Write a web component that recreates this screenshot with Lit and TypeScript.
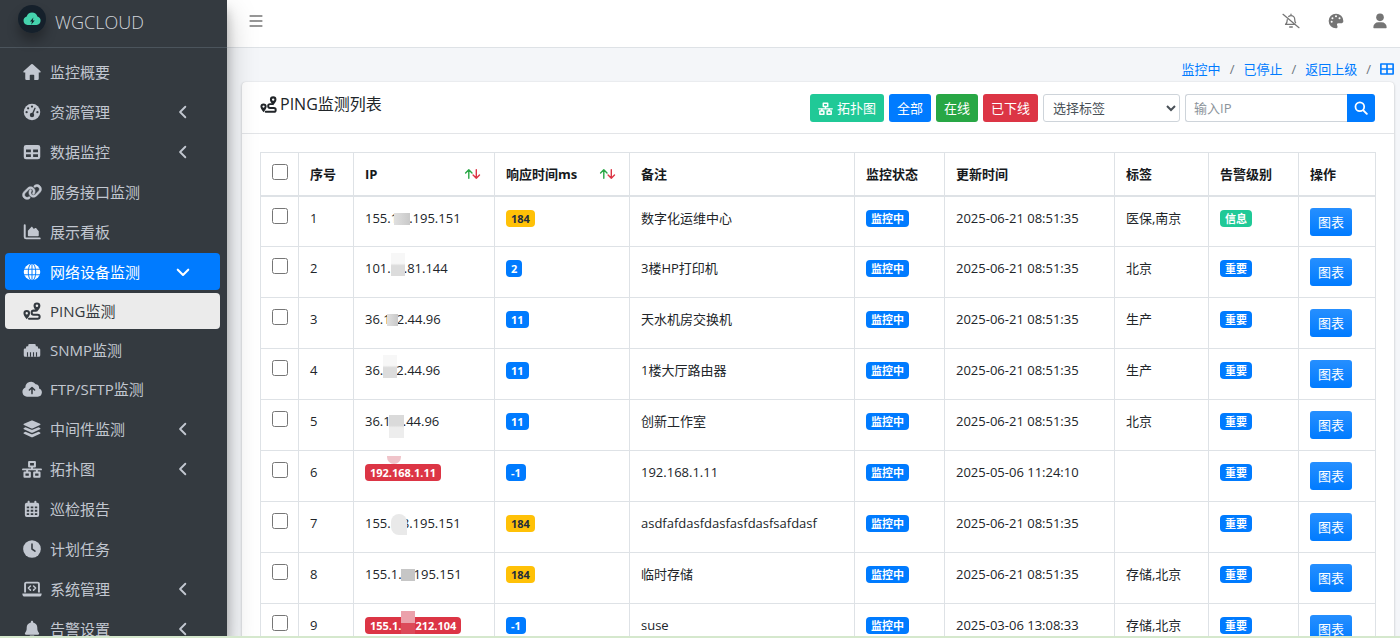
import { LitElement, html, css, nothing } from "lit";
import type { TemplateResult } from "lit";
import { customElement, property } from "lit/decorators.js";
import { classMap } from "lit/directives/class-map.js";
import { styleMap } from "lit/directives/style-map.js";

const icons: Record<string, TemplateResult> = {
  home: html`<svg viewBox="0 0 24 24"><path fill="currentColor" d="M11 1.6a1.6 1.6 0 0 1 2 0l10 9c1 .9.6 2.2-.6 2.2H21V21a1.7 1.7 0 0 1-1.7 1.7H15V16.5a1 1 0 0 0-1-1h-4a1 1 0 0 0-1 1v6.2H4.7A1.7 1.7 0 0 1 3 21v-8.200H1.600c-1.200 0-1.600-1.300-.6-2.200z"/></svg>`,
  gauge: html`<svg viewBox="0 0 24 24"><circle cx="12" cy="12" r="11" fill="currentColor"/><g fill="var(--cut)"><circle cx="12" cy="4.800" r="1.500"/><circle cx="6.800" cy="7" r="1.500"/><circle cx="4.800" cy="12.200" r="1.500"/><circle cx="19.200" cy="12.200" r="1.500"/><circle cx="12" cy="16" r="2.900"/></g><path d="M12 16 16 7" stroke="var(--cut)" stroke-width="1.800" stroke-linecap="round"/></svg>`,
  table: html`<svg viewBox="0 0 24 24"><path fill="currentColor" fill-rule="evenodd" d="M4 2.500h16a3 3 0 0 1 3 3v13a3 3 0 0 1-3 3H4a3 3 0 0 1-3-3v-13a3 3 0 0 1 3-3zM4 8.500v3.700h6.500V8.500zm9.500 0v3.700H20V8.500zM4 15v3.700h6.500V15zm9.500 0v3.700H20V15z"/></svg>`,
  link: html`<svg viewBox="0 0 640 512"><path fill="currentColor" stroke="currentColor" stroke-width="18" d="M580 267c56-57 56-148 0-205-50-50-129-56-187-15l-2 1c-14 11-17 31-7 45 10 15 30 18 45 8l1-1c32-23 76-20 104 8 31 31 31 82 0 113L422 334c-32 31-82 31-113 0-28-28-32-72-9-104l1-2c10-14 7-34-7-44s-34-7-45 7l-1 2c-41 57-35 136 15 187 57 56 148 56 205 0zM60 245c-57 56-57 148 0 204 50 51 129 57 187 16l2-2c14-10 17-30 7-44-10-15-30-18-45-8l-1 1c-32 23-76 20-104-9-31-31-31-81 0-112l112-113c32-31 82-31 113 0 28 28 32 72 9 104l-1 2c-10 14-7 34 7 44s34 7 45-7l1-2c41-57 35-136-15-186-57-57-148-57-205 0z"/></svg>`,
  chart: html`<svg viewBox="0 0 24 24"><path fill="none" stroke="currentColor" stroke-width="2.600" stroke-linecap="round" stroke-linejoin="round" d="M2.300 3v15.500a2 2 0 0 0 2 2h18"/><path fill="currentColor" d="M6.500 16.500v-6.200l4.300-4.800c.5-.6 1.300-.6 1.800 0L14.500 8l1.600-1.200c.5-.4 1.200-.3 1.600.3l3.300 4v5.400c0 .5-.4 1-1 1H7.500c-.6 0-1-.5-1-1z"/></svg>`,
  globe: html`<svg viewBox="0 0 24 24"><circle cx="12" cy="12" r="11" fill="currentColor"/><g fill="none" stroke="var(--cut)" stroke-width="1.300"><ellipse cx="12" cy="12" rx="5" ry="11.500"/><path d="M0 8.300h24M0 15.700h24M12 0v24"/></g></svg>`,
  route: html`<svg viewBox="0 0 24 24"><path fill="none" stroke="currentColor" stroke-width="2.700" stroke-linecap="round" d="M17.200 11.500h-3a2.700 2.700 0 0 0 0 5.400h5.300a2.700 2.700 0 0 1 0 5.400H8"/><path fill="currentColor" fill-rule="evenodd" d="M18.600.5a4.600 4.600 0 0 1 4.600 4.600c0 2.500-2.300 5.500-4.600 8-2.300-2.500-4.600-5.500-4.600-8A4.600 4.600 0 0 1 18.600.5zm0 2.900a1.700 1.700 0 1 0 0 3.400 1.700 1.700 0 0 0 0-3.400zM5 10.500a4.400 4.400 0 0 1 4.400 4.400c0 2.400-2.200 5.500-4.400 8-2.200-2.500-4.400-5.600-4.400-8A4.400 4.400 0 0 1 5 10.500zm0 2.800a1.600 1.600 0 1 0 0 3.200 1.600 1.600 0 0 0 0-3.200z"/></svg>`,
  port: html`<svg viewBox="0 0 24 24"><path fill="currentColor" d="M2.500 10H4V8.500A1.500 1.500 0 0 1 5.500 7H7V5.500A1.500 1.500 0 0 1 8.500 4h7A1.500 1.500 0 0 1 17 5.500V7h1.500A1.500 1.500 0 0 1 20 8.500V10h1.500A1.500 1.500 0 0 1 23 11.500V19a2 2 0 0 1-2 2H3a2 2 0 0 1-2-2v-7.500A1.500 1.500 0 0 1 2.500 10z"/><path stroke="var(--cut)" stroke-width="1.500" d="M6 15v6M10 15v6M14 15v6M18 15v6"/></svg>`,
  cloudUp: html`<svg viewBox="0 0 26 23"><path fill="currentColor" d="M6.500 21.500A6.200 6.200 0 0 1 4.400 9.600a7.300 7.300 0 0 1 13.400-4.200 4.500 4.500 0 0 1 4.300 5.400 5.500 5.500 0 0 1-1.600 10.700z"/><path fill="none" stroke="var(--cut)" stroke-width="2" stroke-linecap="round" stroke-linejoin="round" d="M13 17.500V10M9.600 12.800 13 9.500l3.400 3.300"/></svg>`,
  layers: html`<svg viewBox="0 0 24 24"><path fill="currentColor" d="M11.300.8a2 2 0 0 1 1.400 0l10 4.200c.8.400.8 1.400 0 1.800l-10 4.400a2 2 0 0 1-1.400 0L1.300 6.800c-.8-.4-.8-1.400 0-1.800zM3.300 9.600l7.300 3.200a3.500 3.500 0 0 0 2.800 0l7.300-3.200 2 .9c.8.400.8 1.500 0 1.900l-10 4.500a2 2 0 0 1-1.400 0l-10-4.500c-.8-.4-.8-1.500 0-1.900zM3.300 15.600l7.300 3.200a3.500 3.500 0 0 0 2.800 0l7.300-3.200 2 .9c.8.400.8 1.500 0 1.900l-10 4.500a2 2 0 0 1-1.400 0l-10-4.500c-.8-.4-.8-1.500 0-1.900z"/></svg>`,
  network: html`<svg viewBox="0 0 26 23"><path fill="none" stroke="currentColor" stroke-width="2.600" stroke-linejoin="round" d="M9.200 2.500h7.600v5.600H9.200zM3.200 16h7v5.600h-7zM15.800 16h7v5.600h-7zM13 8v4M6.700 12v4M19.300 12v4"/><path stroke="currentColor" stroke-width="2.300" stroke-linecap="round" d="M1.200 12h23.600"/></svg>`,
  calendar: html`<svg viewBox="0 0 24 24"><path fill="currentColor" fill-rule="evenodd" d="M7.500 1c.8 0 1.400.6 1.400 1.400v1.300h6.200V2.400a1.400 1.400 0 0 1 2.800 0v1.300H19a2.500 2.500 0 0 1 2.500 2.500V20a2.500 2.500 0 0 1-2.500 2.500H5A2.500 2.500 0 0 1 2.500 20V6.200A2.500 2.500 0 0 1 5 3.700h1.100V2.400C6.100 1.600 6.700 1 7.500 1zM5 8.500v2.600h3.200V8.500zm5.300 0v2.600h3.400V8.500zm5.500 0v2.600H19V8.500zM5 13.100v2.500h3.200v-2.500zm5.300 0v2.500h3.400v-2.500zm5.500 0v2.500H19v-2.500zM5 17.600v2.500h3.200v-2.500zm5.300 0v2.500h3.400v-2.500zm5.500 0v2.500H19v-2.500z"/></svg>`,
  clock: html`<svg viewBox="0 0 24 24"><circle cx="12" cy="12" r="11.800" fill="currentColor"/><path fill="none" stroke="var(--cut)" stroke-width="2.100" stroke-linecap="round" stroke-linejoin="round" d="M12 5.500V12l4 2.800"/></svg>`,
  laptop: html`<svg viewBox="0 0 26 23"><path fill="none" stroke="currentColor" stroke-width="2.500" stroke-linejoin="round" d="M4 16V4.800A1.600 1.600 0 0 1 5.600 3.200h14.800A1.600 1.600 0 0 1 22 4.800V16"/><path fill="currentColor" d="M.5 17.200h25v.8a3.300 3.300 0 0 1-3.300 3.300H3.800A3.300 3.300 0 0 1 .5 18z"/><path fill="none" stroke="currentColor" stroke-width="2" stroke-linecap="round" stroke-linejoin="round" d="m11 7.600-2.700 2.700L11 13M15 7.600l2.700 2.700L15 13"/></svg>`,
  bell: html`<svg viewBox="0 0 24 24"><path fill="currentColor" d="M12 1c.8 0 1.500.6 1.500 1.500v.8c3.300.7 5.600 3.400 5.600 7v1.500c0 2 .7 3.700 2 5.200.9 1 .3 2.500-1 2.500H3.900c-1.300 0-1.900-1.500-1-2.500 1.300-1.500 2-3.200 2-5.200v-1.500c0-3.600 2.300-6.300 5.600-7v-.8C10.500 1.600 11.200 1 12 1zM9 20.500h6a3 3 0 0 1-6 0z"/></svg>`,
  bellOff: html`<svg viewBox="0 0 26 24"><g fill="none" stroke="currentColor" stroke-width="1.900" stroke-linecap="round" stroke-linejoin="round"><path d="M1 2l24 20M9.500 5.200A5.500 5.500 0 0 1 13 4a5.600 5.600 0 0 1 5.600 5.600c0 2 .4 3.600 1.300 5M7.400 10c0 3.400-.8 5.300-2.600 7.200h13M13 1.800V4M11 21h4"/></g></svg>`,
  palette: html`<svg viewBox="0 0 24 24"><path fill="currentColor" d="M23 12v.2c0 2-1.800 3.300-3.700 3.300h-3.600a2.200 2.200 0 0 0-2 3c.3.700.6 1.200.6 2 0 1.400-1 2.500-2.300 2.500A11 11 0 1 1 23 12z"/><g fill="var(--cut)"><circle cx="5.500" cy="13" r="1.500"/><circle cx="6.700" cy="7.800" r="1.500"/><circle cx="12" cy="5" r="1.500"/><circle cx="17.300" cy="7.800" r="1.500"/></g></svg>`,
  user: html`<svg viewBox="0 0 24 24"><circle cx="12" cy="6.500" r="5.700" fill="currentColor"/><path fill="currentColor" d="M2 21.500A7.500 7.500 0 0 1 9.500 14h5a7.500 7.500 0 0 1 7.500 7.500c0 .9-.6 1.500-1.400 1.500H3.400c-.8 0-1.400-.6-1.400-1.500z"/></svg>`,
  menu: html`<svg viewBox="0 0 24 24"><path stroke="currentColor" stroke-width="2.700" stroke-linecap="round" d="M2 3.500h20M2 12h20M2 20.500h20"/></svg>`,
  grid: html`<svg viewBox="0 0 24 24"><path fill="none" stroke="currentColor" stroke-width="2.800" stroke-linejoin="round" d="M1.500 3.500h21v17h-21zM12 3.500v17M1.500 12h21"/></svg>`,
  left: html`<svg viewBox="0 0 24 24"><path fill="none" stroke="currentColor" stroke-width="3.200" stroke-linecap="round" stroke-linejoin="round" d="M16 3 7 12l9 9"/></svg>`,
  down: html`<svg viewBox="0 0 24 24"><path fill="none" stroke="currentColor" stroke-width="3.600" stroke-linecap="round" stroke-linejoin="round" d="m3 8 9 9 9-9"/></svg>`,
  search: html`<svg viewBox="0 0 24 24"><circle cx="10" cy="10" r="7.500" fill="none" stroke="currentColor" stroke-width="3"/><path stroke="currentColor" stroke-width="3.300" stroke-linecap="round" d="m16 16 6 6"/></svg>`,
  sort: html`<svg viewBox="0 0 17 12"><g fill="none" stroke-width="1.400" stroke-linecap="round" stroke-linejoin="round"><path stroke="#28a745" d="M4.800 10.200V1.800M1.600 5l3.200-3.200L8 5"/><path stroke="#dc3545" d="M12.300 1.600v8.600M9.100 7l3.200 3.200L15.500 7"/></g></svg>`,
  logo: html`<svg viewBox="0 0 28 28"><circle cx="14" cy="14" r="14" fill="#15202b"/><path fill="#45d3ae" d="M9.500 20a4.400 4.400 0 0 1-.8-8.600 5.600 5.600 0 0 1 10.700 0A4.400 4.400 0 0 1 18.600 20z"/><path fill="#15202b" d="m15.400 12.500-3.400 4h2l-.8 3.300 3.500-4.200h-2z"/></svg>`,
};

interface NavItem {
  icon: string;
  label: string;
  fold?: boolean;
  open?: boolean;
  children?: NavItem[];
}

const NAV: NavItem[] = [
  { icon: "home", label: "监控概要" },
  { icon: "gauge", label: "资源管理", fold: true },
  { icon: "table", label: "数据监控", fold: true },
  { icon: "link", label: "服务接口监测" },
  { icon: "chart", label: "展示看板" },
  {
    icon: "globe", label: "网络设备监测", fold: true, open: true,
    children: [
      { icon: "route", label: "PING监测", open: true },
      { icon: "port", label: "SNMP监测" },
      { icon: "cloudUp", label: "FTP/SFTP监测" },
    ],
  },
  { icon: "layers", label: "中间件监测", fold: true },
  { icon: "network", label: "拓扑图", fold: true },
  { icon: "calendar", label: "巡检报告" },
  { icon: "clock", label: "计划任务" },
  { icon: "laptop", label: "系统管理", fold: true },
  { icon: "bell", label: "告警设置", fold: true },
];

/** An address whose middle part is hidden behind a mosaic block `mask` pixels wide. */
interface Ip {
  head: string;
  mask?: number;
  tone?: string;
  tail?: string;
}

interface Row {
  ip: Ip;
  down?: boolean;
  ms: number;
  note: string;
  time: string;
  tags: string;
  level: string;
}

const NOW = "2025-06-21 08:51:35";
const ROWS: Row[] = [
  { ip: { head: "155.1", mask: 11, tone: "mid", tail: ".195.151" }, ms: 184, note: "数字化运维中心", time: NOW, tags: "医保,南京", level: "信息" },
  { ip: { head: "101.", mask: 13, tone: "tall", tail: ".81.144" }, ms: 2, note: "3楼HP打印机", time: NOW, tags: "北京", level: "重要" },
  { ip: { head: "36.1", mask: 6, tone: "mid", tail: "2.44.96" }, ms: 11, note: "天水机房交换机", time: NOW, tags: "生产", level: "重要" },
  { ip: { head: "36.", mask: 13, tone: "tall", tail: "2.44.96" }, ms: 11, note: "1楼大厅路由器", time: NOW, tags: "生产", level: "重要" },
  { ip: { head: "36.1", mask: 12, tone: "low", tail: ".44.96" }, ms: 11, note: "创新工作室", time: NOW, tags: "北京", level: "重要" },
  { ip: { head: "192.168.1.11", mask: 0, tone: "cap" }, down: true, ms: -1, note: "192.168.1.11", time: "2025-05-06 11:24:10", tags: "", level: "重要" },
  { ip: { head: "155.", mask: 11, tone: "pale", tail: "8.195.151" }, ms: 184, note: "asdfafdasfdasfasfdasfsafdasf", time: NOW, tags: "", level: "重要" },
  { ip: { head: "155.1.", mask: 12, tone: "dark", tail: "195.151" }, ms: 184, note: "临时存储", time: NOW, tags: "存储,北京", level: "重要" },
  { ip: { head: "155.1.", mask: 14, tone: "pink", tail: "212.104" }, down: true, ms: -1, note: "suse", time: "2025-03-06 13:08:33", tags: "存储,北京", level: "重要" },
];

const base = css`
  * { box-sizing: border-box; }
  svg { display: block; width: 100%; height: 100%; }
  a { text-decoration: none; color: inherit; }
  button, input, select { font: inherit; }
  .icon { display: block; flex: none; width: 18px; height: 18px; }
`;

@customElement("side-nav")
export class SideNav extends LitElement {
  static styles = [
    base,
    css`
      :host {
        --cut: #343a40;
        display: flex;
        flex-direction: column;
        background: #343a40;
        color: #c2c7d0;
        overflow: hidden;
        font-size: 15px;
        line-height: 22px;
      }
      .brand {
        display: flex;
        flex: none;
        gap: 9px;
        height: 48px;
        padding: 5px 18px;
        border-bottom: 1px solid #4b545c;
        font-size: 18px;
        font-weight: 300;
        line-height: 34px;
        color: #d0d4da;
      }
      .logo { width: 28px; height: 28px; border-radius: 50%; box-shadow: 0 8px 12px rgba(0, 0, 0, 0.3); }
      ul { list-style: none; margin: 0; padding: 0; }
      .list { padding: 5px 7px 0 5px; }
      .item {
        display: flex;
        align-items: center;
        height: 37px;
        margin-bottom: 3px;
        padding: 0 30px 0 17px;
        border-radius: 4px;
      }
      .sub .item { height: 36px; }
      .icon { width: 20px; }
      .label { flex: 1; margin-left: 8px; white-space: nowrap; }
      .item.open { --cut: #007bff; background: #007bff; color: #fff; }
      .sub .item.open { background: #ebebeb; color: #343a40; }
      .arrow { width: 14px; height: 14px; }
    `,
  ];

  private item(n: NavItem): TemplateResult {
    return html`<li>
      <a href="#" class=${classMap({ item: true, open: !!n.open })}>
        <span class="icon">${icons[n.icon]}</span>
        <span class="label">${n.label}</span>
        ${n.fold ? html`<span class="arrow">${n.open ? icons.down : icons.left}</span>` : nothing}
      </a>
      ${n.children ? html`<ul class="sub">${n.children.map((c) => this.item(c))}</ul>` : nothing}
    </li>`;
  }

  render() {
    return html`
      <a class="brand" href="#"><span class="logo">${icons.logo}</span><span>WGCLOUD</span></a>
      <nav><ul class="list">${NAV.map((n) => this.item(n))}</ul></nav>
    `;
  }
}

@customElement("ping-table")
export class PingTable extends LitElement {
  @property({ attribute: false }) rows: Row[] = [];

  static styles = [
    base,
    css`
      :host { display: block; }
      table { width: 100%; table-layout: fixed; border-collapse: collapse; }
      th, td {
        border: 1px solid #dee2e6;
        padding: 11px 11px 0;
        text-align: left;
        vertical-align: top;
        white-space: nowrap;
        line-height: 20px;
      }
      th { height: 43px; border-bottom-width: 2px; font-weight: 700; color: #16191c; }
      td { height: 51px; }
      .c-check { width: 38px; }
      .c-no { width: 55px; }
      .c-ip { width: 141px; }
      .c-ms { width: 135px; }
      .c-narrow { width: 90px; }
      .c-time { width: 170px; }
      .c-tags { width: 94px; }
      .c-op { width: 77px; }
      .check { display: block; width: 16px; height: 16px; margin: 0; }
      .head { display: flex; align-items: center; justify-content: space-between; }
      .sort { width: 17px; height: 12px; margin-right: 2px; }
      .badge {
        display: inline-block;
        padding: 0 5px;
        border-radius: 4px;
        background: #007bff;
        color: #fff;
        font-size: 11px;
        font-weight: 700;
        line-height: 17px;
      }
      .badge.warn { background: #ffc107; color: #1f2d3d; }
      .badge.info { background: #20c997; }
      .badge.down { position: relative; background: #dc3545; }
      .mask { display: inline-block; position: relative; height: 12px; vertical-align: -2px; }
      .mask::before {
        content: "";
        position: absolute;
        inset: 0 -1px 0 -4px;
        background: linear-gradient(90deg, #e0e0e0, #c9c9c9);
      }
      .mask.tall::before { inset: -10px -1px -1px 0; background: linear-gradient(#f7f7f7 45%, #dcdcdc 55%); }
      .mask.low::before { inset: -1px -1px -10px -2px; background: linear-gradient(#dadada 45%, #ededed 55%); }
      .mask.pale::before { inset: -4px -5px -5px 0; background: #e9e9e9; border-radius: 10px 10px 0 10px; }
      .mask.dark::before { inset: 0 -1px 0 -1px; background: #c6c6c6; }
      .mask.pink::before { inset: -9px 0 -2px 0; background: linear-gradient(#eba1ab 50%, #dc4a59 50%); }
      .mask.cap { position: static; }
      .mask.cap::before {
        inset: -8px auto auto 22px;
        width: 14px;
        height: 8px;
        border-radius: 0 0 7px 7px;
        background: #f0c4ca;
      }
      .chart {
        display: block;
        height: 28px;
        padding: 0 8px;
        border: 0;
        border-radius: 3px;
        background: linear-gradient(#268fff, #007bff);
        color: #fff;
      }
    `,
  ];

  private ip(v: Ip) {
    return html`${v.head}<span class="mask ${v.tone}" style=${styleMap({ width: `${v.mask}px` })}></span>${v.tail ?? nothing}`;
  }

  render() {
    return html`<table>
      <colgroup>
        <col class="c-check" /><col class="c-no" /><col class="c-ip" /><col class="c-ms" /><col />
        <col class="c-narrow" /><col class="c-time" /><col class="c-tags" /><col class="c-narrow" /><col class="c-op" />
      </colgroup>
      <thead>
        <tr>
          <th><input class="check" type="checkbox" aria-label="全选" /></th>
          <th>序号</th>
          <th><span class="head">IP<span class="sort">${icons.sort}</span></span></th>
          <th><span class="head">响应时间ms<span class="sort">${icons.sort}</span></span></th>
          <th>备注</th><th>监控状态</th><th>更新时间</th><th>标签</th><th>告警级别</th><th>操作</th>
        </tr>
      </thead>
      <tbody>
        ${this.rows.map((r, i) => html`<tr>
          <td><input class="check" type="checkbox" aria-label=${`选择 ${i + 1}`} /></td>
          <td>${i + 1}</td>
          <td>${r.down ? html`<span class="badge down">${this.ip(r.ip)}</span>` : this.ip(r.ip)}</td>
          <td><span class=${classMap({ badge: true, warn: r.ms > 100 })}>${r.ms}</span></td>
          <td>${r.note}</td>
          <td><span class="badge">监控中</span></td>
          <td>${r.time}</td>
          <td>${r.tags}</td>
          <td><span class=${classMap({ badge: true, info: r.level === "信息" })}>${r.level}</span></td>
          <td><button class="chart" type="button">图表</button></td>
        </tr>`)}
      </tbody>
    </table>`;
  }
}

@customElement("app-root")
export class AppRoot extends LitElement {
  static styles = [
    base,
    css`
      :host {
        --cut: #fff;
        display: flex;
        height: 100vh;
        overflow: hidden;
        border-bottom: 2px solid #d5e8cd;
        box-sizing: border-box;
        background: #f4f6f9;
        color: #212529;
        font: 13px/20px "Open Sans", "Noto Sans", "Noto Sans CJK SC", sans-serif;
      }
      side-nav {
        flex: none;
        width: 227px;
        z-index: 1;
        box-shadow: 0 14px 28px rgba(0, 0, 0, 0.25), 0 10px 10px rgba(0, 0, 0, 0.22);
      }
      main { flex: 1; min-width: 0; }
      .topbar {
        display: flex;
        align-items: center;
        gap: 28px;
        height: 48px;
        padding: 0 12px 5px 22px;
        border-bottom: 1px solid #dee2e6;
        background: #fff;
        color: #757575;
      }
      .tool { display: block; width: 16px; height: 16px; padding: 0; border: 0; background: none; color: inherit; }
      .tool.burger { width: 14px; height: 14px; margin-right: auto; }
      .tool.wide { width: 18px; }
      .crumbs {
        display: flex;
        align-items: center;
        justify-content: flex-end;
        gap: 9px;
        height: 34px;
        padding: 7px 6px 0 0;
        color: #6c757d;
      }
      .crumbs a { color: #007bff; }
      .grid { width: 14px; height: 14px; }
      .card {
        margin: 0 6px 0 15px;
        border-radius: 4px;
        background: #fff;
        box-shadow: 0 0 1px rgba(0, 0, 0, 0.125), 0 1px 3px rgba(0, 0, 0, 0.2);
      }
      .card-head {
        display: flex;
        align-items: flex-start;
        gap: 5px;
        height: 52px;
        padding: 12px 19px 0 18px;
        border-bottom: 1px solid #e3e5e8;
      }
      h1 { display: flex; align-items: center; gap: 3px; margin: 0 auto 0 0; font-size: 16px; font-weight: 400; line-height: 20px; }
      h1 .icon { width: 17px; height: 17px; }
      .btn {
        display: flex;
        align-items: center;
        gap: 4px;
        height: 28px;
        padding: 0 8px;
        border: 0;
        border-radius: 3px;
        color: #fff;
        background: #007bff;
        white-space: nowrap;
      }
      .btn.teal { background: #20c997; }
      .btn.green { background: #28a745; }
      .btn.red { background: #dc3545; }
      .btn .icon { width: 15px; height: 15px; }
      .field { height: 28px; border: 1px solid #ced4da; border-radius: 3px; background: #fff; color: #495057; }
      select.field { width: 137px; padding: 0 5px; }
      .search { display: flex; }
      input.field { width: 162px; padding: 0 8px; border-right: 0; border-radius: 3px 0 0 3px; }
      input.field::placeholder { color: #8b939a; }
      .search .btn { width: 28px; padding: 0 7px; border-radius: 0 3px 3px 0; }
      .search .icon { width: 14px; height: 14px; }
      .card-body { padding: 18px; }
    `,
  ];

  render() {
    return html`
      <side-nav></side-nav>
      <main>
        <header class="topbar">
          <button class="tool burger" type="button" aria-label="菜单">${icons.menu}</button>
          <button class="tool wide" type="button" aria-label="通知">${icons.bellOff}</button>
          <button class="tool" type="button" aria-label="主题">${icons.palette}</button>
          <button class="tool" type="button" aria-label="用户">${icons.user}</button>
        </header>
        <nav class="crumbs">
          <a href="#">监控中</a><span>/</span><a href="#">已停止</a><span>/</span><a href="#">返回上级</a><span>/</span>
          <a class="grid" href="#" aria-label="视图">${icons.grid}</a>
        </nav>
        <section class="card">
          <div class="card-head">
            <h1><span class="icon">${icons.route}</span>PING监测列表</h1>
            <button class="btn teal" type="button"><span class="icon">${icons.network}</span>拓扑图</button>
            <button class="btn" type="button">全部</button>
            <button class="btn green" type="button">在线</button>
            <button class="btn red" type="button">已下线</button>
            <select class="field" aria-label="选择标签"><option>选择标签</option></select>
            <form class="search">
              <input class="field" type="text" placeholder="输入IP" aria-label="输入IP" />
              <button class="btn" type="button" aria-label="搜索"><span class="icon">${icons.search}</span></button>
            </form>
          </div>
          <div class="card-body"><ping-table .rows=${ROWS}></ping-table></div>
        </section>
      </main>
    `;
  }
}
